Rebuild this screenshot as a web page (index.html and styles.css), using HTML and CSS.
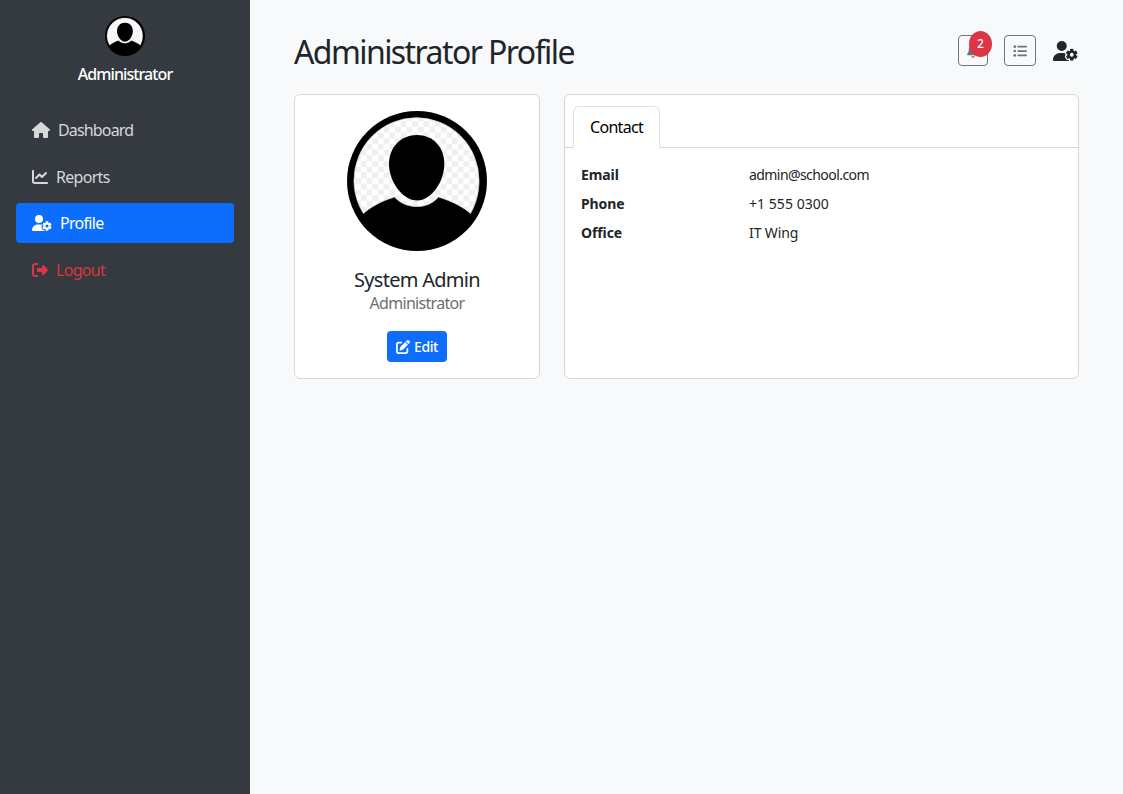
FILE: index.html
```html
<!DOCTYPE html>
<html lang="en">
<head>
<meta charset="utf-8">
<title>Administrator Profile</title>
<link rel="stylesheet" href="styles.css">
</head>
<body>
<svg class="defs" width="0" height="0" aria-hidden="true">
  <defs>
    <pattern id="checks" width="11.4" height="11.4" x="2.5" y="4.4" patternUnits="userSpaceOnUse">
      <rect width="11.4" height="11.4" fill="#fff"/>
      <rect width="5.7" height="5.7" fill="#efefef"/>
      <rect x="5.7" y="5.7" width="5.7" height="5.7" fill="#efefef"/>
    </pattern>
    <symbol id="avatar" viewBox="0 0 140 140">
      <circle cx="70" cy="70" r="70"/>
      <path d="M16.500 102.500C10.500 93 7 81.500 7 69.500A62.500 62.800 0 0 1 132 69.500C132 81.500 129 93 123.500 102.500C118 97 105 90 91.500 86C85 93 78 95.500 70 95.500S54 93 47.500 86C34 90 22 97 16.500 102.500Z" fill="url(#checks)" stroke="#e2e2e2" stroke-width=".7"/>
      <path d="M70 24C86 24 97.300 36 97.300 53C97.300 71 84 89.500 70 89.500S42 71 42 53C42 36 54 24 70 24Z"/>
    </symbol>
    <symbol id="user-gear" viewBox="0 0 640 512">
      <path d="M224 0a128 128 0 1 1 0 256A128 128 0 1 1 224 0zM178.300 304h91.400c11.800 0 23.400 1.200 34.500 3.300c-2.100 18.500 7.400 35.600 21.800 44.800c-16.600 10.600-26.700 31.600-20 53.300c4 12.900 9.400 25.500 16.400 37.600s15.200 23.100 24.400 33c15.700 16.900 39.600 18.400 57.200 8.700v.9c0 9.200 2.700 18.500 7.900 26.300H29.700C13.300 512 0 498.700 0 482.300C0 383.800 79.800 304 178.300 304zM436 218.200c0-7 4.500-13.300 11.300-14.800c10.500-2.400 21.500-3.700 32.700-3.700s22.200 1.300 32.700 3.700c6.800 1.500 11.300 7.800 11.300 14.800v30.600c7.900 3.400 15.400 7.700 22.300 12.800l24.900-14.300c6.100-3.500 13.700-2.700 18.500 2.400c7.600 8.100 14.300 17.200 20.100 27.200s10.300 20.400 13.500 31c2.100 6.700-1.100 13.700-7.200 17.200l-25 14.400c.4 4 .7 8.100 .7 12.300s-.2 8.200-.7 12.300l25 14.400c6.100 3.500 9.200 10.500 7.200 17.200c-3.300 10.600-7.800 21-13.500 31s-12.500 19.100-20.100 27.200c-4.800 5.100-12.500 5.900-18.500 2.400l-24.900-14.300c-6.900 5.100-14.300 9.400-22.300 12.800l0 30.600c0 7-4.500 13.300-11.300 14.800c-10.500 2.400-21.500 3.700-32.700 3.700s-22.200-1.300-32.700-3.700c-6.800-1.500-11.300-7.800-11.300-14.800V454.800c-8-3.400-15.600-7.700-22.500-12.900l-24.700 14.300c-6.100 3.500-13.700 2.700-18.500-2.400c-7.600-8.100-14.300-17.200-20.100-27.200s-10.300-20.400-13.500-31c-2.100-6.700 1.100-13.700 7.200-17.200l24.800-14.300c-.4-4.100-.7-8.200-.7-12.400s.2-8.300 .7-12.400L343.800 325c-6.100-3.500-9.200-10.500-7.200-17.200c3.300-10.600 7.700-21 13.500-31s12.500-19.100 20.100-27.200c4.800-5.100 12.400-5.900 18.500-2.400l24.800 14.300c6.900-5.100 14.500-9.400 22.500-12.900V218.200zm92.100 133.500a48.100 48.100 0 1 0 -96.100 0 48.100 48.100 0 1 0 96.100 0z"/>
    </symbol>
  </defs>
</svg>
<div class="layout">
  <aside class="sidebar">
    <div class="account">
      <svg class="account-avatar"><use href="#avatar"/></svg>
      <div class="account-name">Administrator</div>
    </div>
    <nav class="nav">
      <a class="nav-link"><svg class="icon w18" viewBox="0 0 576 512"><path d="M575.800 255.500c0 18-15 32.100-32 32.100h-32l.7 160.200c0 2.700-.2 5.400-.5 8.100V472c0 22.100-17.900 40-40 40H392c-22.100 0-40-17.900-40-40V384c0-17.700-14.300-32-32-32H256c-17.700 0-32 14.300-32 32v88c0 22.100-17.900 40-40 40H104c-22.100 0-40-17.900-40-40V287.600H32c-18 0-32-14-32-32.100c0-9 3-17 10-24L266.400 8c7-7 15-8 22-8s15 2 21 7L564.800 231.500c8 7 12 15 11 24z"/></svg><span class="label-dashboard">Dashboard</span></a>
      <a class="nav-link"><svg class="icon w16" viewBox="0 0 512 512"><path d="M64 64c0-17.700-14.300-32-32-32S0 46.300 0 64V400c0 44.200 35.800 80 80 80H480c17.700 0 32-14.300 32-32s-14.300-32-32-32H80c-8.800 0-16-7.200-16-16V64zm406.600 86.600c12.500-12.500 12.500-32.800 0-45.300s-32.800-12.500-45.300 0L320 210.700l-57.400-57.400c-12.500-12.500-32.800-12.500-45.300 0l-112 112c-12.500 12.500-12.500 32.800 0 45.300s32.800 12.500 45.300 0L240 221.300l57.400 57.400c12.500 12.500 32.800 12.500 45.300 0l128-128z"/></svg><span>Reports</span></a>
      <a class="nav-link active"><svg class="icon w20"><use href="#user-gear"/></svg><span>Profile</span></a>
      <a class="nav-link danger"><svg class="icon w16" viewBox="0 0 512 512"><path d="M377.900 105.900L500.700 228.700c7.200 7.200 11.300 17.100 11.300 27.300s-4.100 20.100-11.300 27.300L377.900 406.100c-6.400 6.400-15 9.900-24 9.900c-18.700 0-33.900-15.200-33.900-33.900l0-62.100-128 0c-17.700 0-32-14.300-32-32l0-64c0-17.700 14.300-32 32-32l128 0 0-62.100c0-18.700 15.200-33.900 33.900-33.900c9 0 17.600 3.600 24 9.900zM160 96L96 96c-17.700 0-32 14.300-32 32l0 256c0 17.700 14.300 32 32 32l64 0c17.700 0 32 14.300 32 32s-14.300 32-32 32l-64 0c-53 0-96-43-96-96L0 128C0 75 43 32 96 32l64 0c17.700 0 32 14.300 32 32s-14.300 32-32 32z"/></svg><span>Logout</span></a>
    </nav>
  </aside>
  <main class="main">
    <header class="topbar">
      <h1 class="title">Administrator Profile</h1>
      <div class="actions">
        <button class="tool bell"><svg class="icon" width="12" height="14" viewBox="0 0 448 512"><path d="M224 0c-17.700 0-32 14.300-32 32l0 19.200C119 66 64 130.600 64 208l0 18.800c0 47-17.300 92.400-48.500 127.600l-7.400 8.300c-8.400 9.400-10.400 22.900-5.300 34.400S19.400 416 32 416l384 0c12.600 0 24-7.400 29.200-18.900s3.100-25-5.300-34.400l-7.400-8.300C401.300 319.200 384 273.900 384 226.800l0-18.800c0-77.400-55-142-128-156.800L256 32c0-17.700-14.300-32-32-32zm45.300 493.300c12-12 18.700-28.300 18.700-45.300l-128 0c0 17 6.700 33.300 18.700 45.300s28.300 18.700 45.300 18.700s33.300-6.700 45.300-18.700z"/></svg><span class="badge">2</span></button>
        <button class="tool list"><svg class="icon" width="14" height="14" viewBox="0 0 512 512"><circle cx="64" cy="96" r="48"/><circle cx="64" cy="256" r="48"/><circle cx="64" cy="416" r="48"/><rect x="160" y="64" width="352" height="64" rx="32"/><rect x="160" y="224" width="352" height="64" rx="32"/><rect x="160" y="384" width="352" height="64" rx="32"/></svg></button>
        <svg class="icon user-menu"><use href="#user-gear"/></svg>
      </div>
    </header>
    <div class="cards">
      <section class="card profile">
        <svg class="photo"><use href="#avatar"/></svg>
        <h2 class="name">System Admin</h2>
        <p class="role">Administrator</p>
        <button class="edit"><svg class="icon" width="14" height="14" viewBox="0 0 512 512"><path d="M471.600 21.700c-21.900-21.900-57.300-21.900-79.200 0L362.300 51.700l97.900 97.900 30.100-30.100c21.900-21.900 21.900-57.300 0-79.200L471.600 21.700zm-299.200 220c-6.100 6.100-10.800 13.600-13.500 21.900l-29.600 88.800c-2.900 8.600-.6 18.100 5.800 24.600s15.900 8.700 24.600 5.800l88.800-29.600c8.200-2.700 15.700-7.400 21.900-13.500L437.700 172.300 339.700 74.300 172.400 241.700zM96 64C43 64 0 107 0 160V416c0 53 43 96 96 96H352c53 0 96-43 96-96V320c0-17.700-14.300-32-32-32s-32 14.300-32 32v96c0 17.700-14.300 32-32 32H96c-17.700 0-32-14.300-32-32V160c0-17.700 14.300-32 32-32h96c17.700 0 32-14.300 32-32s-14.300-32-32-32H96z"/></svg><span>Edit</span></button>
      </section>
      <section class="card details">
        <div class="tabs"><a class="tab"><span>Contact</span></a></div>
        <dl class="fields">
          <dt>Email</dt><dd class="email">admin@school.com</dd>
          <dt>Phone</dt><dd class="phone">+1 555 0300</dd>
          <dt>Office</dt><dd>IT Wing</dd>
        </dl>
      </section>
    </div>
  </main>
</div>
</body>
</html>
```

FILE: styles.css
```css
*, *::before, *::after { box-sizing: border-box; }

body {
  margin: 0;
  background: #f8f9fa;
  color: #212529;
  font: 16px/24px Tahoma, "Noto Sans", sans-serif;
  letter-spacing: -0.7px;
}

h1, h2, p, dl, dd { margin: 0; font-weight: 400; }
button { font: inherit; letter-spacing: inherit; margin: 0; padding: 0; }
.defs { position: absolute; }
.icon { display: block; flex: none; fill: currentColor; }

.layout { display: flex; height: 794px; }

.sidebar { width: 250px; flex: none; padding: 16px; background: #343a40; color: #fff; }
.account { display: flex; flex-direction: column; align-items: center; }
.account-avatar { width: 40px; height: 40px; display: block; }
.account-name { margin-top: 6px; font-weight: 500; letter-spacing: -0.9px; }
.nav { display: flex; flex-direction: column; gap: 6.6px; margin-top: 24px; }
.nav-link { display: flex; align-items: center; gap: 8px; height: 40px; padding: 0 16px; border-radius: 4px; color: #d6d8d9; }
.label-dashboard { letter-spacing: -0.85px; }
.nav-link.active { background: #0d6efd; color: #fff; }
.nav-link.danger { color: #dc3545; }
.w16 { width: 16px; height: 16px; }
.w18 { width: 18px; height: 16px; }
.w20 { width: 20px; height: 16px; }

.main { flex: 1; padding: 32px 44px; }
.topbar { display: flex; justify-content: space-between; height: 38px; margin-bottom: 24px; }
.title { font-size: 32px; line-height: 39px; letter-spacing: -1.58px; }
.actions { display: flex; align-items: center; gap: 16px; height: 37px; }
.tool { position: relative; display: flex; align-items: center; justify-content: center; height: 31px; border: 1px solid #6c757d; border-radius: 4px; background: transparent; color: #6c757d; }
.bell { width: 30px; }
.list { width: 32px; }
.badge { position: absolute; left: 10px; top: -5px; width: 23px; height: 26px; border-radius: 50%; background: #dc3545; color: #fff; font-size: 12px; line-height: 26px; text-align: center; font-weight: 500; letter-spacing: 0; }
.user-menu { width: 27px; height: 20px; }

.cards { display: flex; gap: 24px; height: 285px; }
.card { background: #fff; border: 1px solid #d5d7d9; border-radius: 6px; }
.profile { width: 246px; flex: none; display: flex; flex-direction: column; align-items: center; padding-top: 16px; }
.photo { display: block; width: 140px; height: 140px; }
.name { margin-top: 17px; margin-bottom: -1px; font-size: 20px; line-height: 24px; letter-spacing: -0.72px; }
.role { color: #6c6f73; }
.edit { display: flex; align-items: center; justify-content: center; gap: 4px; width: 60px; height: 31px; margin-top: 16px; border: 0; border-radius: 4px; background: #0d6efd; color: #fff; font-size: 14px; font-weight: 500; letter-spacing: -0.45px; }

.details { flex: 1; }
.tabs { display: flex; height: 53px; padding: 11px 8px 0; border-bottom: 1px solid #d5d7d9; }
.tab { height: 42px; padding: 8px 15px 0 16px; border: 1px solid #dee2e6; border-bottom-color: #fff; border-radius: 6px 6px 0 0; background: #fff; color: #000; width: 87px; }
.fields { display: grid; grid-template-columns: 168px 1fr; grid-auto-rows: 21px; row-gap: 8px; padding: 16px; font-size: 14px; line-height: 21px; letter-spacing: -0.1px; }
.fields dt { font-weight: 700; }
.fields .email { letter-spacing: -0.57px; }
.fields .phone { letter-spacing: 0.05px; }
```
